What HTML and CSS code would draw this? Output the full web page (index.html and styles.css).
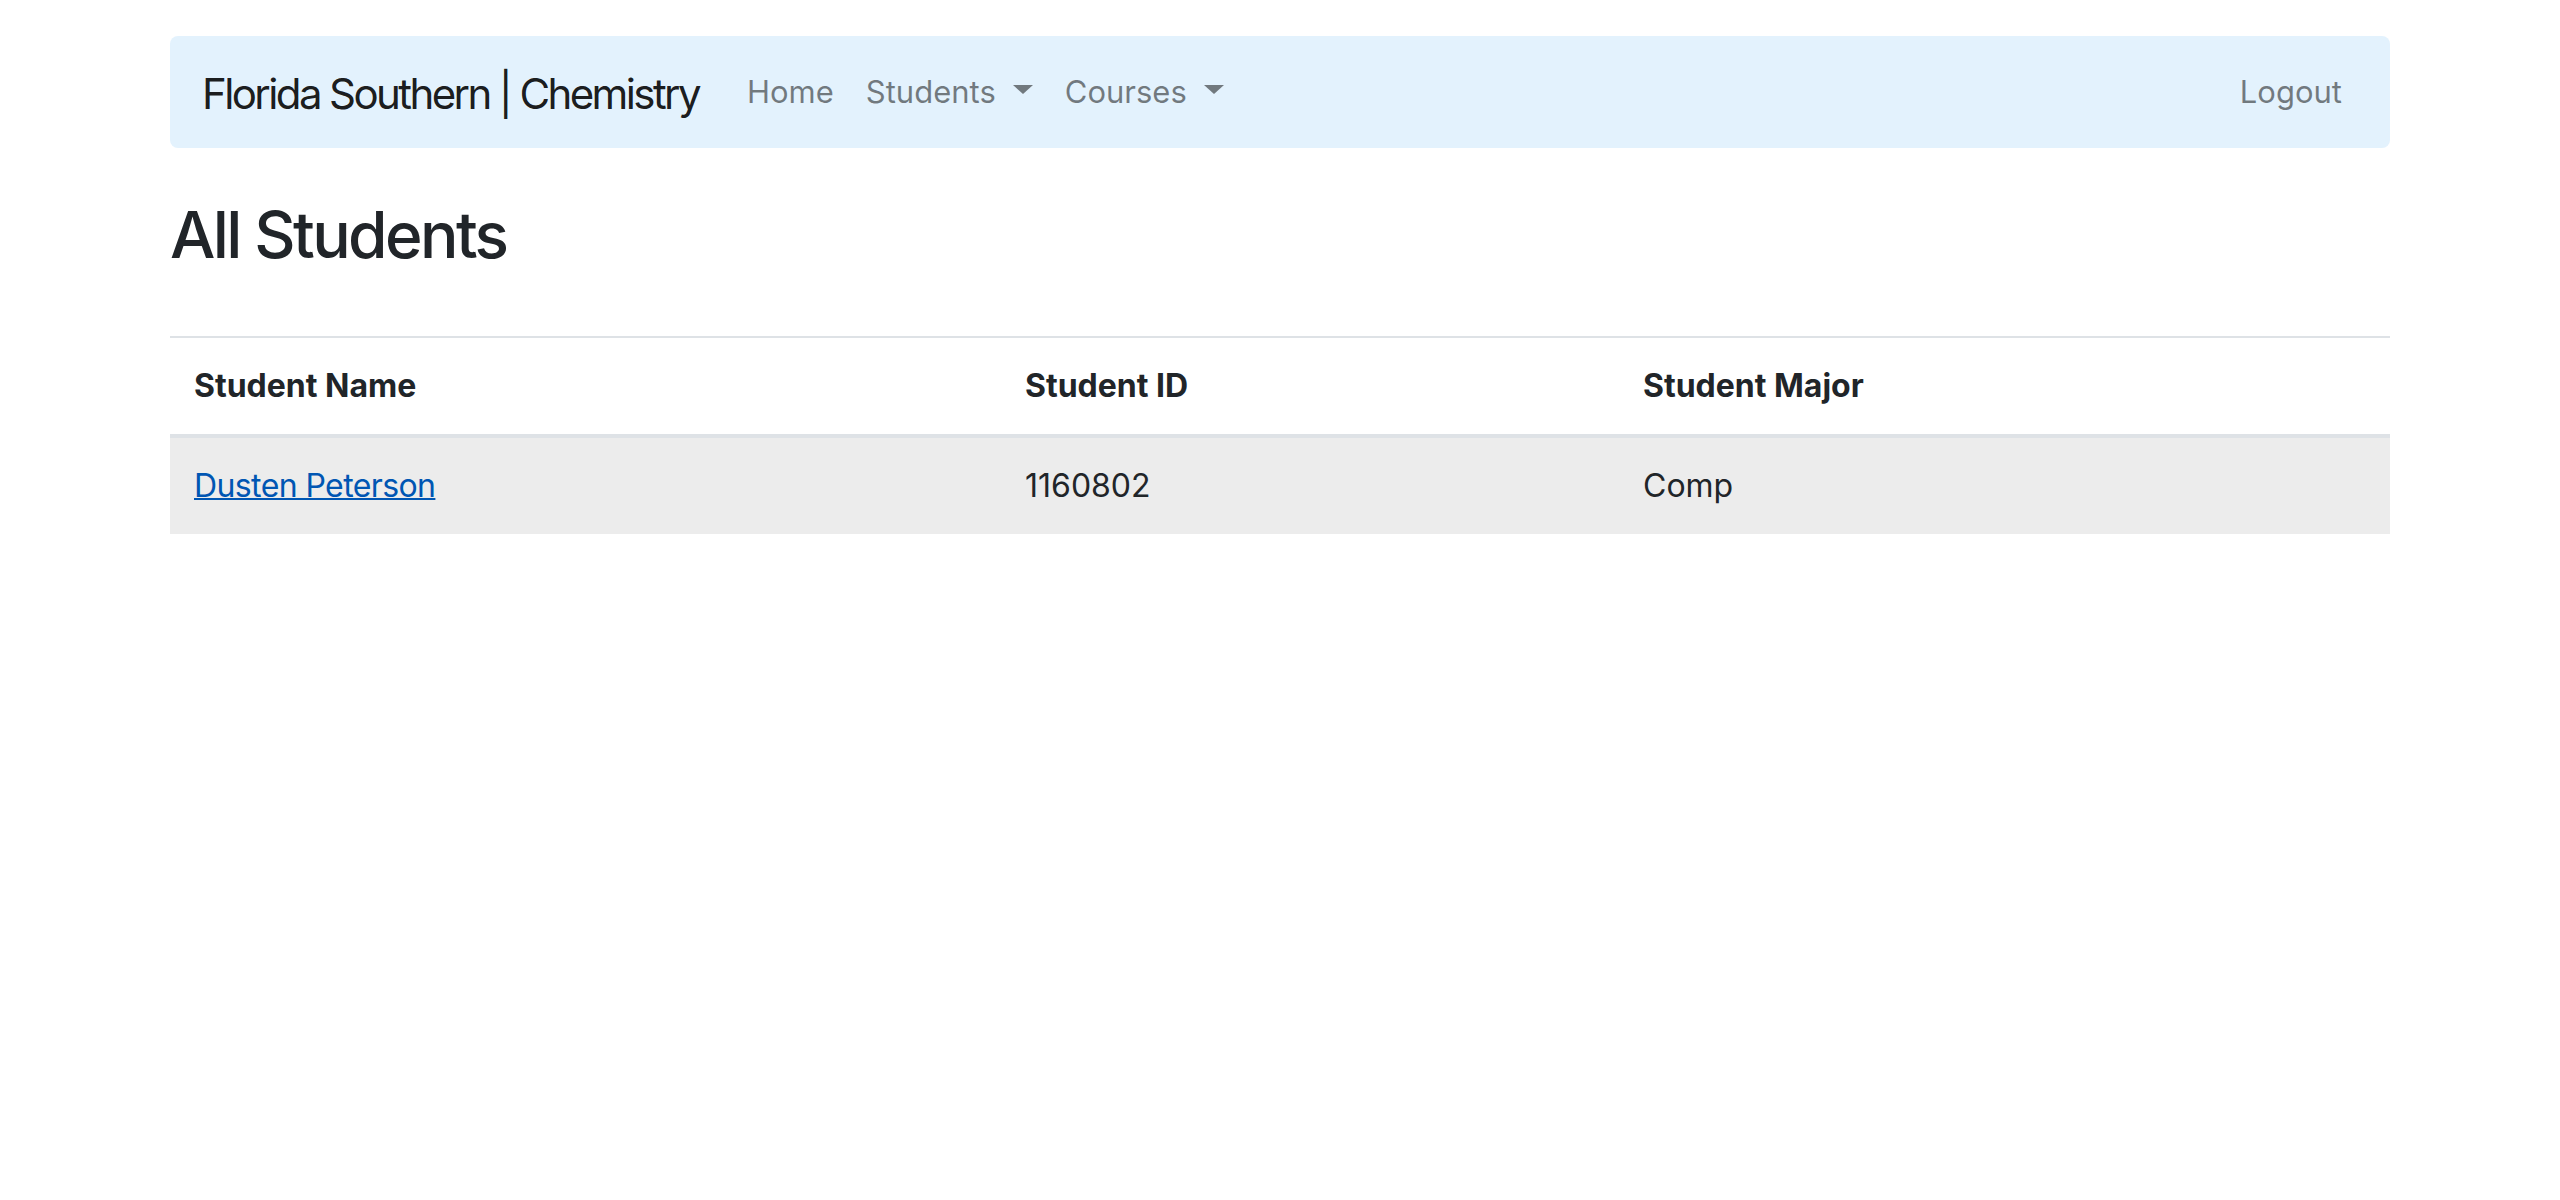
FILE: index.html
```html
<!DOCTYPE html>
<html lang="en">
<head>
<meta charset="utf-8">
<title>All Students</title>
<link rel="stylesheet" href="styles.css">
</head>
<body>
<div class="container">
  <nav class="navbar">
    <a class="brand" href="#">Florida Southern | Chemistry</a>
    <ul class="nav">
      <li><a class="nav-link" href="#">Home</a></li>
      <li><a class="nav-link dropdown" href="#">Students</a></li>
      <li><a class="nav-link dropdown" href="#">Courses</a></li>
    </ul>
    <ul class="nav nav-right">
      <li><a class="nav-link" href="#">Logout</a></li>
    </ul>
  </nav>
  <h1 class="title">All Students</h1>
  <table class="table">
    <thead>
      <tr>
        <th class="col-name">Student Name</th>
        <th class="col-id">Student ID</th>
        <th class="col-major">Student Major</th>
      </tr>
    </thead>
    <tbody>
      <tr>
        <td><a class="student-link" href="#">Dusten Peterson</a></td>
        <td>1160802</td>
        <td>Comp</td>
      </tr>
    </tbody>
  </table>
</div>
</body>
</html>
```
FILE: styles.css
```css
* { box-sizing: border-box; }
html, body { margin: 0; padding: 0; background: #fff; }
body {
  font-family: Inter, "Noto Sans", "Liberation Sans", sans-serif;
  color: #212529;
  font-size: 32px;
  line-height: 1.5;
}
.container {
  max-width: 2280px;
  margin: 0 auto;
  padding: 36px 30px 0;
}
.navbar {
  display: flex;
  align-items: center;
  background: #e3f2fd;
  border-radius: 8px;
  padding: 16px 32px;
  height: 112px;
}
.brand {
  font-size: 42px;
  letter-spacing: -2.6px;
  line-height: 60px;
  padding: 12px 0 8px;
  margin-right: 32px;
  color: rgba(0,0,0,.9);
  text-decoration: none;
  white-space: nowrap;
}
.nav {
  list-style: none;
  margin: 0;
  padding: 0;
  display: flex;
}
.nav-right { margin-left: auto; }
.nav-link {
  display: block;
  padding: 16px;
  font-size: 31px;
  line-height: 48px;
  color: rgba(0,0,0,.5);
  text-decoration: none;
}
.dropdown::after {
  content: "";
  display: inline-block;
  margin-left: 17px;
  vertical-align: 9px;
  border-top: 9px solid;
  border-left: 10px solid transparent;
  border-right: 10px solid transparent;
}
.title {
  font-size: 64px;
  font-weight: 500;
  line-height: 77px;
  letter-spacing: -2.6px;
  margin: 48px 0 63px;
}
.table {
  width: 100%;
  border-collapse: separate;
  border-spacing: 0;
}
.table th, .table td {
  text-align: left;
  padding: 24px;
  line-height: 48px;
}
.table th {
  font-weight: 700;
  border-top: 2px solid #dee2e6;
  border-bottom: 4px solid #dee2e6;
}
.table tbody tr td { background: #ececec; }
.col-name { width: 831px; }
.col-id { width: 618px; }
.student-link {
  color: #0056b3;
  letter-spacing: -0.6px;
  text-decoration: underline;
  text-decoration-thickness: 2px;
}
```
